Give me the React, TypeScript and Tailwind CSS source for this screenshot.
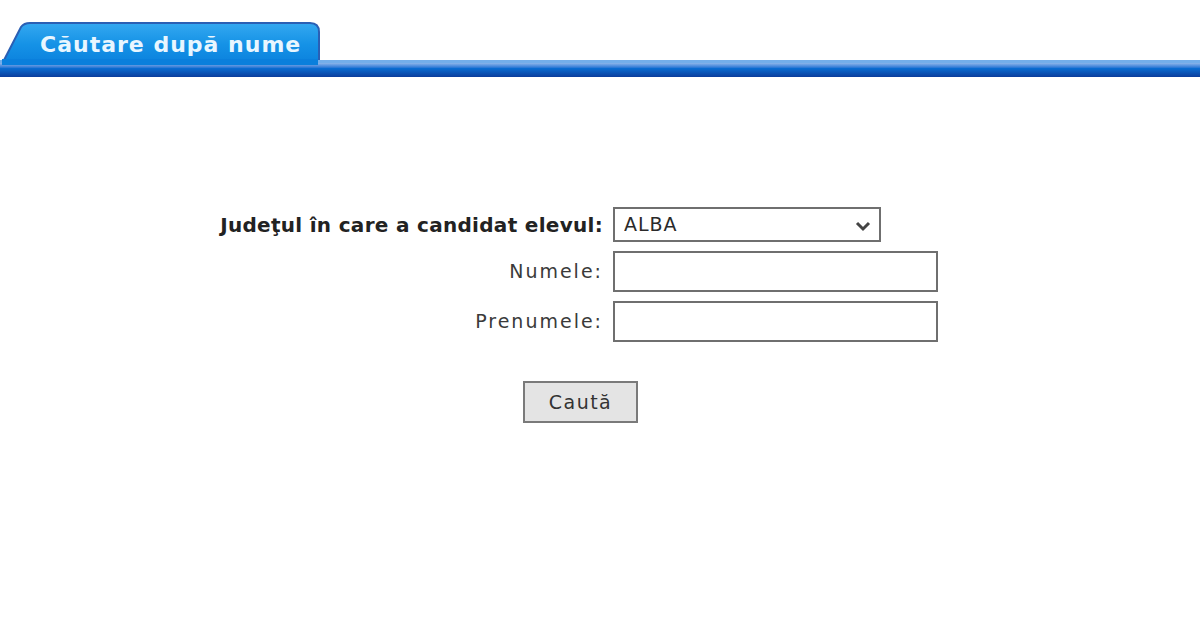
import { useState } from 'react';

const font = { fontFamily: '"DejaVu Sans", Verdana, sans-serif' };

const Tab = ({ label }: { label: string }) => {
  return (
    <div className="relative h-[77px]">
      {/* tab shape */}
      <svg className="absolute left-0 top-[20px]" width="324" height="46" viewBox="0 0 324 46">
        <defs>
          <linearGradient id="tabFill" x1="0" y1="0" x2="0" y2="1">
            <stop offset="0" stopColor="#34a8f0" />
            <stop offset="0.5" stopColor="#1592e6" />
            <stop offset="1" stopColor="#0a7fdc" />
          </linearGradient>
        </defs>
        <path d="M1 46 L21 7 Q24 3 30 3 L310 3 Q319 3 319 12 L319 46 Z" fill="url(#tabFill)" stroke="#2a5fb4" strokeWidth="2" />
      </svg>
      <span
        className="absolute left-[40px] top-[31px] text-[22px] font-bold leading-[28px] tracking-[1px] text-[#e8f6ff]"
        style={font}
      >
        {label}
      </span>
      {/* bar */}
      <div className="absolute left-0 right-0 top-[60px] h-[17px] bg-gradient-to-b from-[#c8dcf5] via-[#0a6bd0] to-[#0b3d9c]">
        <div className="h-[3px] bg-[#74aeea]" />
      </div>
      <div className="absolute left-[2px] top-[59px] h-[6px] w-[316px] bg-[#0a7fdc]" />
    </div>
  );
};

export default function App() {
  const [judet, setJudet] = useState('ALBA');

  return (
    <div className="h-[618px] w-[1200px] overflow-hidden bg-white" style={font}>
      <Tab label="Căutare după nume" />

      <form className="mt-[130px]" onSubmit={(e) => e.preventDefault()}>
        <div className="grid grid-cols-[603px_1fr] items-center gap-x-[10px] gap-y-[9px]">
          <label className="text-right text-[20px] font-bold tracking-[0.3px] text-[#222]">Judeţul în care a candidat elevul:</label>
          <div className="relative h-[35px] w-[268px] border-2 border-[#6f6f6f]">
            <select
              value={judet}
              onChange={(e) => setJudet(e.target.value)}
              className="h-full w-full appearance-none bg-white pl-[9px] text-[19px] tracking-[1px] text-[#2a2a2a] outline-none"
              style={font}
            >
              <option>ALBA</option>
              <option>ARAD</option>
              <option>ARGEŞ</option>
            </select>
            <svg className="pointer-events-none absolute right-[8px] top-[11px]" width="16" height="12" viewBox="0 0 16 12">
              <path d="M2 3 L8 9 L14 3" fill="none" stroke="#444" strokeWidth="3" />
            </svg>
          </div>

          <label className="text-right text-[19px] tracking-[2px] text-[#3a3a3a]">Numele:</label>
          <input className="h-[41px] w-[325px] border-2 border-[#6f6f6f] bg-white px-2 outline-none" />

          <label className="text-right text-[19px] tracking-[2px] text-[#3a3a3a]">Prenumele:</label>
          <input className="h-[41px] w-[325px] border-2 border-[#6f6f6f] bg-white px-2 outline-none" />
        </div>

        <button
          type="submit"
          className="ml-[523px] mt-[39px] h-[42px] w-[115px] border-2 border-[#7a7a7a] bg-[#e4e4e4] text-[19px] tracking-[1.5px] text-[#333]"
          style={font}
        >
          Caută
        </button>
      </form>
    </div>
  );
}
